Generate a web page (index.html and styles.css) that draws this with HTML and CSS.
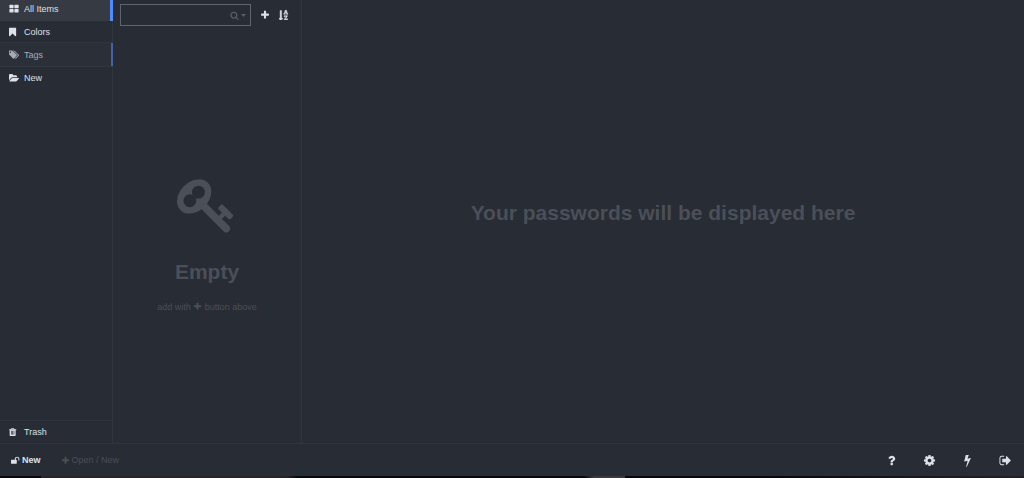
FILE: index.html
```
<!DOCTYPE html>
<html lang="en">
<head>
    <meta charset="UTF-8">
    <meta name="viewport" content="width=device-width, initial-scale=1.0">
    <title>Passwords</title>
    <link rel="stylesheet" href="styles.css">
</head>
<body>

<svg class="icon-defs" aria-hidden="true">
    <symbol id="th-large" viewBox="0 0 1792 1792"><path d="M832 1024v384q0 52-38 90t-90 38h-512q-52 0-90-38t-38-90v-384q0-52 38-90t90-38h512q52 0 90 38t38 90zm0-768v384q0 52-38 90t-90 38h-512q-52 0-90-38t-38-90v-384q0-52 38-90t90-38h512q52 0 90 38t38 90zm896 768v384q0 52-38 90t-90 38h-512q-52 0-90-38t-38-90v-384q0-52 38-90t90-38h512q52 0 90 38t38 90zm0-768v384q0 52-38 90t-90 38h-512q-52 0-90-38t-38-90v-384q0-52 38-90t90-38h512q52 0 90 38t38 90z"/></symbol>
    <symbol id="bookmark" viewBox="256 0 1792 1792"><path d="M1420 128q23 0 44 9 33 13 52.500 41t19.500 62v1289q0 34-19.500 62t-52.500 41q-19 8-44 8-48 0-83-32l-441-424-441 424q-36 33-83 33-23 0-44-9-33-13-52.500-41t-19.500-62v-1289q0-34 19.500-62t52.500-41q21-9 44-9h1048z"/></symbol>
    <symbol id="tags" viewBox="0 64 1850 1792"><path d="M384 448q0-53-37.500-90.500t-90.500-37.500-90.500 37.500-37.500 90.500 37.500 90.500 90.500 37.500 90.500-37.500 37.500-90.500zm1067 576q0 53-37 90l-491 492q-39 37-91 37-53 0-90-37l-715-716q-38-37-64.500-101t-26.500-117v-416q0-52 38-90t90-38h416q53 0 117 26.500t102 64.500l715 714q37 39 37 91zm384 0q0 53-37 90l-491 492q-39 37-91 37-36 0-59-14t-53-45l470-470q37-37 37-90 0-52-37-91l-715-714q-38-38-102-64.500t-117-26.500h224q53 0 117 26.500t102 64.500l715 714q37 39 37 91z"/></symbol>
    <symbol id="folder-open" viewBox="0 0 1880 1792"><path d="M1879 952q0 31-31 66l-336 396q-43 51-120.500 86.500t-143.500 35.500h-1088q-34 0-60.500-13t-26.500-43q0-31 31-66l336-396q43-51 120.500-86.500t143.500-35.500h1088q34 0 60.500 13t26.500 43zm-343-344v160h-832q-94 0-197 47.500t-164 119.500l-337 396-5 6q0-4-.5-12.500t-.5-12.500v-960q0-92 66-158t158-66h320q92 0 158 66t66 158v32h544q92 0 158 66t66 158z"/></symbol>
    <symbol id="trash" viewBox="192 -64 1920 1920"><path d="M704 1376v-704q0-14-9-23t-23-9h-64q-14 0-23 9t-9 23v704q0 14 9 23t23 9h64q14 0 23-9t9-23zm256 0v-704q0-14-9-23t-23-9h-64q-14 0-23 9t-9 23v704q0 14 9 23t23 9h64q14 0 23-9t9-23zm256 0v-704q0-14-9-23t-23-9h-64q-14 0-23 9t-9 23v704q0 14 9 23t23 9h64q14 0 23-9t9-23zm-544-992h448l-48-117q-7-9-17-11h-317q-10 2-17 11zm928 32v64q0 14-9 23t-23 9h-96v948q0 83-47 143.500t-113 60.500h-832q-66 0-113-58.500t-47-141.500v-952h-96q-14 0-23-9t-9-23v-64q0-14 9-23t23-9h309l70-167q15-37 54-63t79-26h320q40 0 79 26t54 63l70 167h309q14 0 23 9t9 23z"/></symbol>
    <symbol id="search" viewBox="0 0 1792 1792"><path d="M1216 832q0-185-131.500-316.500t-316.500-131.500-316.500 131.500-131.500 316.500 131.500 316.500 316.500 131.500 316.500-131.500 131.500-316.500zm512 832q0 52-38 90t-90 38q-54 0-90-38l-343-342q-179 124-399 124-143 0-273.500-55.500t-225-150-150-225-55.500-273.500 55.500-273.500 150-225 225-150 273.500-55.500 273.500 55.500 225 150 150 225 55.500 273.500q0 220-124 399l343 343q37 37 37 90z"/></symbol>
    <symbol id="caret-down" viewBox="0 0 10 6"><path d="M0 0h10L5 6z"/></symbol>
    <symbol id="plus" viewBox="0 0 1792 1792"><path d="M1600 736v192q0 40-28 68t-68 28h-416v416q0 40-28 68t-68 28h-192q-40 0-68-28t-28-68v-416h-416q-40 0-68-28t-28-68v-192q0-40 28-68t68-28h416v-416q0-40 28-68t68-28h192q40 0 68 28t28 68v416h416q40 0 68 28t28 68z"/></symbol>
    <symbol id="sort" viewBox="100 0 1700 1800"><path d="M1191 448h177l-72-218-12-47q-2-16-2-20h-4l-3 20q0 1-3.500 18t-7.500 29zm-455 1088q0 12-10 24l-319 319q-10 9-23 9-12 0-23-9l-320-320q-15-16-7-35 8-20 30-20h192v-1376q0-14 9-23t23-9h192q14 0 23 9t9 23v1376h192q14 0 23 9t9 23zM1572 1559v233h-584v-90l369-529q12-18 21-27l11-9v-3h-14q-12 3-30 3h-232v115h-120v-229h567v89l-369 530q-6 8-21 26l-11 11v2l14-2q9-2 30-2h248v-119h121zM1661 661v106h-288v-106h75l-47-144h-243l-47 144h75v106h-287v-106h70l230-662h162l230 662h70z" stroke="currentColor" stroke-width="90"/></symbol>
    <symbol id="key" viewBox="0 0 1792 1792"><path d="M832 512q0-80-56-136t-136-56-136 56-56 136q0 42 19 83-41-19-83-19-80 0-136 56t-56 136 56 136 136 56 136-56 56-136q0-42-19-83 41 19 83 19 80 0 136-56t56-136zm851 704q0 17-49 66t-66 49q-9 0-28.500-16t-36.500-33-38.500-40-24.500-26l-96 96 220 220q28 28 28 68 0 42-39 81t-81 39q-40 0-68-28l-671-671q-176 131-365 131-163 0-265.500-102.500t-102.500-265.500q0-160 95-313t248-248 313-95q163 0 265.500 102.500t102.500 265.500q0 189-131 365l355 355 96-96q-3-3-26-24.500t-40-38.500-33-36.500-16-28.500q0-17 49-66t66-49q13 0 23 10 6 6 46 44.500t82 79.500 86.500 86 73 78 28.500 41z"/></symbol>
    <symbol id="unlock" viewBox="0 0 1792 1792"><path d="M1664 576v256q0 26-19 45t-45 19h-64q-26 0-45-19t-19-45v-256q0-106-75-181t-181-75-181 75-75 181v192h96q40 0 68 28t28 68v576q0 40-28 68t-68 28h-960q-40 0-68-28t-28-68v-576q0-40 28-68t68-28h672v-192q0-185 131.500-316.500t316.500-131.500 316.500 131.500 131.500 316.500z"/></symbol>
    <symbol id="question" viewBox="0 0 1792 1792"><path d="M1088 1256v240q0 16-12 28t-28 12h-240q-16 0-28-12t-12-28v-240q0-16 12-28t28-12h240q16 0 28 12t12 28zm316-600q0 54-15.500 101t-35 76.500-55 59.500-57.500 43.500-61 35.500q-41 23-68.500 65t-27.500 67q0 17-12 32.500t-28 15.500h-240q-15 0-25.500-18.500t-10.500-37.500v-45q0-83 65-156.500t143-108.500q59-27 84-56t25-76q0-42-46.500-74t-107.500-32q-65 0-108 29-35 25-107 115-13 16-31 16-12 0-25-8l-164-125q-13-10-15.500-25t5.500-28q160-266 464-266 80 0 161 31t146 83 106 127.500 41 158.500z"/></symbol>
    <symbol id="cog" viewBox="0 0 1792 1792"><path d="M1152 896q0-106-75-181t-181-75-181 75-75 181 75 181 181 75 181-75 75-181zm512-109v222q0 12-8 23t-20 13l-185 28q-19 54-39 91 35 50 107 138 10 12 10 25t-9 23q-27 37-99 108t-94 71q-12 0-26-9l-138-108q-44 23-91 38-16 136-29 186-7 28-36 28h-222q-14 0-24.500-8.500t-11.500-21.500l-28-184q-49-16-90-37l-141 107q-10 9-25 9-14 0-25-11-126-114-165-168-7-10-7-23 0-12 8-23 15-21 51-66.500t54-70.500q-27-50-41-99l-183-27q-13-2-21-12.500t-8-23.500v-222q0-12 8-23t19-13l186-28q14-46 39-92-40-57-107-138-10-12-10-24 0-10 9-23 26-36 98.500-107.500t94.500-71.500q13 0 26 10l138 107q44-23 91-38 16-136 29-186 7-28 36-28h222q14 0 24.500 8.500t11.500 21.500l28 184q49 16 90 37l142-107q9-9 24-9 13 0 25 10 129 119 165 170 7 8 7 22 0 12-8 23-15 21-51 66.500t-54 70.500q26 50 41 98l183 28q13 2 21 12.500t8 23.500z"/></symbol>
    <symbol id="bolt" viewBox="0 0 1792 1792"><path d="M1333 566q18 20 7 44l-540 1157q-13 25-42 25-4 0-14-2-17-5-25.500-19t-4.500-30l197-808-406 101q-4 1-12 1-18 0-31-11-18-15-13-39l201-825q4-14 16-23t28-9h328q19 0 32 12.500t13 29.500q0 8-5 18l-171 463 396-98q8-2 12-2 19 0 34 15z"/></symbol>
    <symbol id="sign-out" viewBox="0 0 1792 1792"><path d="M704 1440q0 4 1 20t.5 26.500-3 23.500-10 19.500-20.500 6.500h-320q-119 0-203.500-84.500t-84.500-203.500v-704q0-119 84.500-203.500t203.500-84.500h320q13 0 22.500 9.500t9.500 22.500q0 4 1 20t.5 26.500-3 23.500-10 19.500-20.500 6.500h-320q-66 0-113 47t-47 113v704q0 66 47 113t113 47h312l11.500 1 11.500 3 8 5.500 7 9 2 13.500zm928-544q0 26-19 45l-544 544q-19 19-45 19t-45-19-19-45v-288h-448q-26 0-45-19t-19-45v-384q0-26 19-45t45-19h448v-288q0-26 19-45t45-19 45 19l544 544q19 19 19 45z"/></symbol>
</svg>

<div class="app">
    <div class="body">
        <nav class="menu">
            <button class="menu-item active"><svg class="icon"><use href="#th-large"/></svg>All Items</button>
            <button class="menu-item"><svg class="icon"><use href="#bookmark"/></svg>Colors</button>
            <button class="menu-item tags"><svg class="icon"><use href="#tags"/></svg>Tags</button>
            <button class="menu-item"><svg class="icon"><use href="#folder-open"/></svg>New</button>
            <button class="menu-item trash"><svg class="icon"><use href="#trash"/></svg>Trash</button>
        </nav>

        <section class="list">
            <div class="list-header">
                <div class="search">
                    <input type="text" class="search-input" aria-label="Search">
                    <button class="search-button" aria-label="Advanced search">
                        <svg class="search-icon"><use href="#search"/></svg>
                        <svg class="caret"><use href="#caret-down"/></svg>
                    </button>
                </div>
                <button class="list-button" aria-label="Add new"><svg class="icon"><use href="#plus"/></svg></button>
                <button class="list-button" aria-label="Sort"><svg class="icon"><use href="#sort"/></svg></button>
            </div>
            <div class="empty">
                <svg class="empty-icon"><use href="#key"/></svg>
                <h1 class="title">Empty</h1>
                <p class="hint">add with <svg class="hint-icon"><use href="#plus"/></svg> button above</p>
            </div>
        </section>

        <main class="details">
            <h1 class="title">Your passwords will be displayed here</h1>
        </main>
    </div>

    <footer class="footer">
        <button class="footer-button open"><svg class="footer-icon"><use href="#unlock"/></svg>New</button>
        <button class="footer-button muted"><svg class="footer-icon"><use href="#plus"/></svg>Open / New</button>
        <div class="footer-actions">
            <button class="action" aria-label="Help"><svg class="action-icon"><use href="#question"/></svg></button>
            <button class="action" aria-label="Settings"><svg class="action-icon"><use href="#cog"/></svg></button>
            <button class="action" aria-label="Generate"><svg class="action-icon"><use href="#bolt"/></svg></button>
            <button class="action" aria-label="Lock"><svg class="action-icon"><use href="#sign-out"/></svg></button>
        </div>
    </footer>
    <div class="edge"></div>
</div>

</body>
</html>
```
FILE: styles.css
```
* {
    box-sizing: border-box;
}
body {
    margin: 0;
    overflow: hidden;
    background-color: #282c34;
    color: #dde1ea;
    font-family: "Liberation Sans", Arial, sans-serif;
    font-size: 9px;
    line-height: 12px;
}
button {
    display: flex;
    align-items: center;
    padding: 0;
    border: 0;
    background: none;
    color: inherit;
    font: inherit;
    cursor: pointer;
}
svg {
    fill: currentColor;
    flex-shrink: 0;
}
.icon-defs {
    display: none;
}
.icon {
    width: 10px;
    height: 10px;
}
.app {
    display: flex;
    flex-direction: column;
    height: 100vh;
}
.body {
    display: flex;
    flex: 1;
    min-height: 0;
}

.menu {
    display: flex;
    flex-direction: column;
    width: 113px;
    margin-top: -3px;
    border-right: 1px solid #31353e;
}
.menu-item {
    gap: 5px;
    height: 23px;
    padding-left: 9px;
}
.menu-item.active {
    height: 24px;
    margin-right: -1px;
    margin-bottom: -1px;
    background-color: #363a43;
    border-right: 3px solid #528bff;
}
.menu-item.tags {
    margin-right: -1px;
    background-color: #2b3038;
    border-right: 2px solid #4562a8;
    color: #a6abb5;
    box-shadow: 0 -1px #30353e, 0 1px #30353e;
}
.menu-item.trash {
    margin-top: auto;
    border-top: 1px solid #31353e;
}

.list {
    display: flex;
    flex-direction: column;
    width: 189px;
    border-right: 1px solid #31353e;
}
.list-header {
    display: flex;
    align-items: center;
    gap: 9px;
    padding: 4px 7px;
}
.search {
    display: flex;
    width: 131px;
    height: 22px;
    border: 1px solid #60646d;
}
.search-input {
    flex: 1;
    min-width: 0;
    padding: 0 4px;
    border: 0;
    outline: 0;
    background: none;
    color: inherit;
    font: inherit;
}
.search-button {
    gap: 2px;
    padding-right: 4px;
    color: #5a5e67;
}
.search-icon {
    width: 9px;
    height: 9px;
}
.caret {
    width: 5px;
    height: 3px;
}
.empty {
    display: flex;
    flex: 1;
    flex-direction: column;
    align-items: center;
    justify-content: center;
    padding-top: 15px;
    color: #4b4f58;
}
.empty-icon {
    width: 60px;
    height: 60px;
    margin-bottom: 21px;
}
.title {
    margin: 0;
    font-size: 21px;
    line-height: 32px;
    font-weight: bold;
}
.hint {
    margin: 13px 0 0;
}
.hint-icon {
    width: 9px;
    height: 9px;
    vertical-align: -1px;
}
.details {
    display: flex;
    flex: 1;
    align-items: center;
    justify-content: center;
    padding-bottom: 18px;
    color: #4b4f58;
}

.footer {
    display: flex;
    align-items: center;
    height: 33px;
    padding: 0 12px 0 11px;
    border-top: 1px solid #31353e;
}
.footer-button {
    gap: 2px;
    margin-right: 20px;
}
.footer-button.open {
    font-weight: bold;
}
.footer-button.muted {
    color: #4b4f58;
}
.footer-icon {
    width: 9px;
    height: 9px;
}
.footer-actions {
    display: flex;
    gap: 25px;
    margin-left: auto;
}
.action-icon {
    width: 13px;
    height: 13px;
}

/* dark strip under the window */
.edge {
    height: 2px;
    background: linear-gradient(to right, #08080a 4%, #2a2427 4% 28%, #08080a 29% 57%, #3a3a3e 58% 61%, #08080a 61% 75%, #242124);
}
```
